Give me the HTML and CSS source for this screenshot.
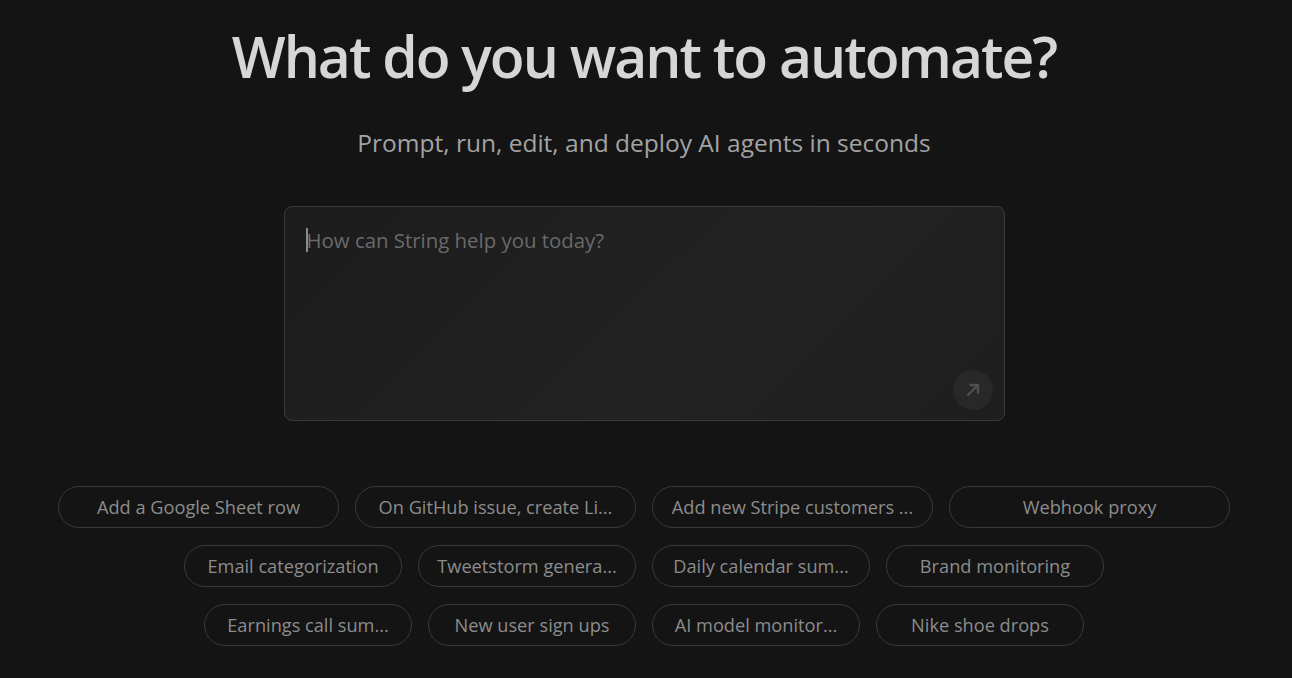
FILE: index.html
```html
<!DOCTYPE html>
<html>
<head lang="en">
    <meta charset="UTF-8">
    <title>String</title>
    <link rel="stylesheet" href="styles.css">
</head>
<body>
    <div id="container">
        <h1 class="title">What do you want to automate?</h1>
        <p class="subtitle">Prompt, run, edit, and deploy AI agents in seconds</p>
        <div class="prompt-box">
            <div class="prompt-text"><span class="caret"></span>How can String help you today?</div>
            <div class="send-btn">
                <svg width="20" height="20" viewBox="0 0 20 20">
                    <path d="M5 15 L14.5 5.5 M7.5 5 H15 V12.5" fill="none" stroke="#505050" stroke-width="2.4" stroke-linecap="round" stroke-linejoin="round"/>
                </svg>
            </div>
        </div>
        <div class="chips">
            <div class="chip-row row-1">
                <div class="chip">Add a Google Sheet row</div>
                <div class="chip">On GitHub issue, create Li...</div>
                <div class="chip">Add new Stripe customers ...</div>
                <div class="chip">Webhook proxy</div>
            </div>
            <div class="chip-row row-2">
                <div class="chip">Email categorization</div>
                <div class="chip">Tweetstorm genera...</div>
                <div class="chip">Daily calendar sum...</div>
                <div class="chip">Brand monitoring</div>
            </div>
            <div class="chip-row row-3">
                <div class="chip">Earnings call sum...</div>
                <div class="chip">New user sign ups</div>
                <div class="chip">AI model monitor...</div>
                <div class="chip">Nike shoe drops</div>
            </div>
        </div>
    </div>
</body>
</html>
```

FILE: styles.css
```css
*{
    margin: 0;
    padding: 0;
    box-sizing: border-box;
}
body{
    background: #141414;
    font-family: "Open Sans", "Noto Sans", sans-serif;
    height: 678px;
    overflow: hidden;
}
#container{
    display: flex;
    flex-direction: column;
    align-items: center;
    padding-top: 18px;
    padding-right: 4px;
}
.title{
    font-size: 57px;
    font-weight: 600;
    color: #d6d6d6;
    letter-spacing: -2px;
    line-height: 76px;
}
.subtitle{
    margin-top: 33px;
    font-size: 24.5px;
    color: #a3a3a3;
    line-height: 32px;
}
.prompt-box{
    margin-top: 47px;
    width: 721px;
    height: 215px;
    border: 1px solid #3a3a3a;
    border-radius: 8px;
    background: linear-gradient(135deg, #1c1c1c 0%, #222222 60%, #1e1e1e 100%);
    padding: 19px 21px 20px;
    display: flex;
    flex-direction: column;
    justify-content: space-between;
}
.prompt-text{
    font-size: 20.4px;
    color: #6a6a6a;
    line-height: 28px;
    display: flex;
    align-items: center;
}
.caret{
    width: 2px;
    height: 24px;
    background: #8a8a8a;
    margin-right: -1px;
}
.send-btn{
    align-self: flex-end;
    width: 40px;
    height: 40px;
    border-radius: 50%;
    background: #282828;
    display: flex;
    align-items: center;
    justify-content: center;
    margin-right: -10px;
    margin-bottom: -10px;
}
.chips{
    margin-top: 65px;
    display: flex;
    flex-direction: column;
    gap: 17px;
}
.chip-row{
    display: flex;
    justify-content: center;
    gap: 16px;
}
.chip{
    height: 42px;
    border: 1px solid #383838;
    border-radius: 21px;
    font-size: 18.2px;
    color: #8c8c8c;
    display: flex;
    align-items: center;
    justify-content: center;
    white-space: nowrap;
}
.row-1 .chip{
    width: 281px;
}
.row-2 .chip{
    width: 218px;
}
.row-3 .chip{
    width: 208px;
}
```
